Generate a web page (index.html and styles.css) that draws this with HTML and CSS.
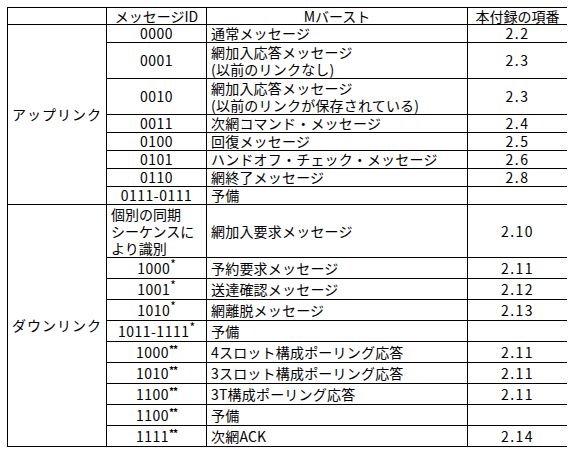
FILE: index.html
```html
<!DOCTYPE html>
<html lang="ja">
<head>
<meta charset="utf-8">
<title>メッセージID一覧</title>
<link rel="stylesheet" href="styles.css">
</head>
<body>
<table class="tbl">
  <colgroup>
    <col class="c1"><col class="c2"><col class="c3"><col class="c4">
  </colgroup>
  <thead>
    <tr class="hdr">
      <th></th><th>メッセージID</th><th>Mバースト</th><th>本付録の項番</th>
    </tr>
  </thead>
  <tbody>
    <tr class="r1">
      <td class="dir" rowspan="8">アップリンク</td>
      <td class="id">0000</td><td class="msg">通常メッセージ</td><td class="ref">2.2</td>
    </tr>
    <tr class="r2">
      <td class="id">0001</td><td class="msg">網加入応答メッセージ<br>(以前のリンクなし)</td><td class="ref">2.3</td>
    </tr>
    <tr class="r2">
      <td class="id">0010</td><td class="msg">網加入応答メッセージ<br>(以前のリンクが保存されている)</td><td class="ref">2.3</td>
    </tr>
    <tr class="r1">
      <td class="id">0011</td><td class="msg">次網コマンド・メッセージ</td><td class="ref">2.4</td>
    </tr>
    <tr class="r1">
      <td class="id">0100</td><td class="msg">回復メッセージ</td><td class="ref">2.5</td>
    </tr>
    <tr class="r1">
      <td class="id">0101</td><td class="msg">ハンドオフ・チェック・メッセージ</td><td class="ref">2.6</td>
    </tr>
    <tr class="r1">
      <td class="id">0110</td><td class="msg">網終了メッセージ</td><td class="ref">2.8</td>
    </tr>
    <tr class="r1">
      <td class="id">0111-0111</td><td class="msg">予備</td><td class="ref"></td>
    </tr>
    <tr class="r3">
      <td class="dir" rowspan="10">ダウンリンク</td>
      <td class="idl">個別の同期<br>シーケンスに<br>より識別</td><td class="msg">網加入要求メッセージ</td><td class="ref">2.10</td>
    </tr>
    <tr class="r4">
      <td class="id">1000<sup class="ast">*</sup></td><td class="msg">予約要求メッセージ</td><td class="ref">2.11</td>
    </tr>
    <tr class="r4">
      <td class="id">1001<sup class="ast">*</sup></td><td class="msg">送達確認メッセージ</td><td class="ref">2.12</td>
    </tr>
    <tr class="r4">
      <td class="id">1010<sup class="ast">*</sup></td><td class="msg">網離脱メッセージ</td><td class="ref">2.13</td>
    </tr>
    <tr class="r4">
      <td class="id">1011-1111<sup class="ast">*</sup></td><td class="msg">予備</td><td class="ref"></td>
    </tr>
    <tr class="r4">
      <td class="id">1000<sup class="ast2">**</sup></td><td class="msg">4スロット構成ポーリング応答</td><td class="ref">2.11</td>
    </tr>
    <tr class="r4">
      <td class="id">1010<sup class="ast2">**</sup></td><td class="msg">3スロット構成ポーリング応答</td><td class="ref">2.11</td>
    </tr>
    <tr class="r4">
      <td class="id">1100<sup class="ast2">**</sup></td><td class="msg">3T構成ポーリング応答</td><td class="ref">2.11</td>
    </tr>
    <tr class="r4">
      <td class="id">1100<sup class="ast2">**</sup></td><td class="msg">予備</td><td class="ref"></td>
    </tr>
    <tr class="r4">
      <td class="id">1111<sup class="ast2">**</sup></td><td class="msg">次網ACK</td><td class="ref">2.14</td>
    </tr>
  </tbody>
</table>
</body>
</html>
```

FILE: styles.css
```css
html, body {
  background: #ffffff;
}
body {
  margin: 7px;
  font-family: "Noto Sans CJK JP", "Noto Sans", sans-serif;
  font-size: 14px;
  color: #000000;
}
.tbl {
  border-collapse: collapse;
  table-layout: fixed;
  width: 560px;
}
.c1 { width: 99px; }
.c2 { width: 100px; }
.c3 { width: 261px; }
.c4 { width: 100px; }

.tbl th, .tbl td {
  border: 1px solid #000000;
  padding: 0 4px;
  line-height: 17px;
  font-weight: normal;
  white-space: nowrap;
}
.hdr th {
  height: 16px;
  line-height: 16px;
  text-align: center;
}
.r1 td { height: 17px; }
.r2 td { height: 35px; }
.r3 td { height: 52px; }
.r4 td { height: 20px; }

.dir {
  text-align: center;
  vertical-align: middle;
  letter-spacing: 1px;
}
.id {
  text-align: center;
  letter-spacing: 0.5px;
  font-variant-numeric: tabular-nums;
}
.idl {
  text-align: left;
  line-height: 17.5px;
}
.msg {
  text-align: left;
  letter-spacing: 0.2px;
}
.ref {
  text-align: center;
  letter-spacing: 1.5px;
  font-variant-numeric: tabular-nums;
}
.ast, .ast2 {
  font-size: 12px;
  line-height: 0;
  vertical-align: 5px;
  letter-spacing: 0;
}
.ast2 {
  font-size: 10px;
  font-weight: bold;
  letter-spacing: -1px;
}
```
